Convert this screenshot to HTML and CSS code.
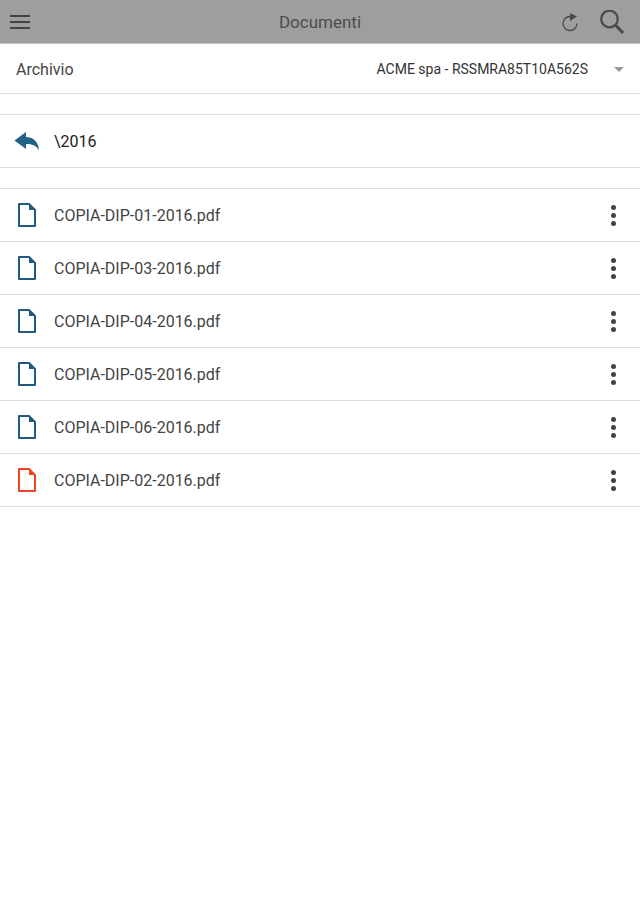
FILE: index.html
```html
<!DOCTYPE html>
<html lang="en">
<head>
  <meta charset="UTF-8">
  <meta name="viewport" content="width=device-width, initial-scale=1.0">
  <title>Documenti</title>
  <link rel="stylesheet" href="styles.css">
</head>
<body>

<header class="toolbar">
  <div class="toolbar-left">
    <div class="menu-icon"><span></span><span></span><span></span></div>
  </div>
  <div class="toolbar-title">Documenti</div>
  <div class="toolbar-actions">
    <svg class="refresh-icon" width="18" height="20" viewBox="0 0 18 20">
      <path d="M9 4.500 A7 7 0 1 0 16 11.500" fill="none" stroke="#4a4a4a" stroke-width="1.300"/>
      <path d="M9 1 L16 4.500 L9 9 Z" fill="#4a4a4a"/>
    </svg>
    <svg class="search-icon" width="24" height="24" viewBox="0 0 24 24">
      <circle cx="9.500" cy="9" r="8.300" fill="none" stroke="#4a4a4a" stroke-width="2.200"/>
      <path d="M15.500 15 L23 23" fill="none" stroke="#4a4a4a" stroke-width="3"/>
    </svg>
  </div>
</header>

<div class="archive-row">
  <span class="archive-label">Archivio</span>
  <span class="archive-value">ACME spa - RSSMRA85T10A562S</span>
  <span class="caret"></span>
</div>

<div class="path-row">
  <svg class="back-icon" width="26" height="22" viewBox="0 0 26 22">
    <path d="M0.500 10.500 L12 2 L12 7 C19 7 24 11 25 20 C22 15.500 18 14 12 14 L12 19 Z" fill="#22618a"/>
  </svg>
  <span class="path-name">\2016</span>
</div>

<ul class="file-list">
  <li class="file-row">
    <svg class="file-icon" width="20" height="24" viewBox="0 0 20 24"><path d="M2 1 H12 L18 7 V23 H2 Z" fill="none" stroke="#22597f" stroke-width="2" stroke-linejoin="round"/><path d="M12 1 V7 H18 Z" fill="#22597f"/></svg>
    <span class="file-name">COPIA-DIP-01-2016.pdf</span>
    <div class="more"><span></span><span></span><span></span></div>
  </li>
  <li class="file-row">
    <svg class="file-icon" width="20" height="24" viewBox="0 0 20 24"><path d="M2 1 H12 L18 7 V23 H2 Z" fill="none" stroke="#22597f" stroke-width="2" stroke-linejoin="round"/><path d="M12 1 V7 H18 Z" fill="#22597f"/></svg>
    <span class="file-name">COPIA-DIP-03-2016.pdf</span>
    <div class="more"><span></span><span></span><span></span></div>
  </li>
  <li class="file-row">
    <svg class="file-icon" width="20" height="24" viewBox="0 0 20 24"><path d="M2 1 H12 L18 7 V23 H2 Z" fill="none" stroke="#22597f" stroke-width="2" stroke-linejoin="round"/><path d="M12 1 V7 H18 Z" fill="#22597f"/></svg>
    <span class="file-name">COPIA-DIP-04-2016.pdf</span>
    <div class="more"><span></span><span></span><span></span></div>
  </li>
  <li class="file-row">
    <svg class="file-icon" width="20" height="24" viewBox="0 0 20 24"><path d="M2 1 H12 L18 7 V23 H2 Z" fill="none" stroke="#22597f" stroke-width="2" stroke-linejoin="round"/><path d="M12 1 V7 H18 Z" fill="#22597f"/></svg>
    <span class="file-name">COPIA-DIP-05-2016.pdf</span>
    <div class="more"><span></span><span></span><span></span></div>
  </li>
  <li class="file-row">
    <svg class="file-icon" width="20" height="24" viewBox="0 0 20 24"><path d="M2 1 H12 L18 7 V23 H2 Z" fill="none" stroke="#22597f" stroke-width="2" stroke-linejoin="round"/><path d="M12 1 V7 H18 Z" fill="#22597f"/></svg>
    <span class="file-name">COPIA-DIP-06-2016.pdf</span>
    <div class="more"><span></span><span></span><span></span></div>
  </li>
  <li class="file-row">
    <svg class="file-icon" width="20" height="24" viewBox="0 0 20 24"><path d="M2 1 H12 L18 7 V23 H2 Z" fill="none" stroke="#ee4423" stroke-width="2" stroke-linejoin="round"/><path d="M12 1 V7 H18 Z" fill="#ee4423"/></svg>
    <span class="file-name">COPIA-DIP-02-2016.pdf</span>
    <div class="more"><span></span><span></span><span></span></div>
  </li>
</ul>

</body>
</html>
```

FILE: styles.css
```css
body {
  font-family: Roboto, Arial, sans-serif;
  background-color: #fff;
  color: #444;
  margin: 0;
  padding: 0;
}

.toolbar {
  display: grid;
  grid-template-columns: 1fr auto 1fr;
  align-items: center;
  height: 42px;
  background-color: #9e9e9e;
  border-bottom: 1px solid #c4c4c4;
  padding: 1px 16px 0;
}

.menu-icon {
  margin-left: -6px;
}

.menu-icon span {
  display: block;
  width: 20px;
  height: 2px;
  background-color: #444;
  margin-bottom: 4px;
}

.menu-icon span:last-child {
  margin-bottom: 0;
}

.toolbar-title {
  font-size: 17px;
  color: #4c4c4c;
}

.toolbar-actions {
  display: flex;
  align-items: center;
  justify-content: flex-end;
  gap: 21px;
}

.archive-row {
  display: flex;
  align-items: center;
  height: 48px;
  padding: 1px 16px 0;
  border-bottom: 1px solid #ddd;
}

.archive-label {
  font-size: 16px;
  flex: 1;
}

.archive-value {
  font-size: 14px;
  color: #333;
}

.caret {
  width: 0;
  height: 0;
  border-left: 5px solid transparent;
  border-right: 5px solid transparent;
  border-top: 5px solid #999;
  margin-left: 26px;
}

.path-row {
  display: flex;
  align-items: center;
  height: 52px;
  margin-top: 20px;
  padding-left: 14px;
  border-top: 1px solid #ddd;
  border-bottom: 1px solid #ddd;
}

.back-icon {
  margin-right: 14px;
}

.path-name {
  font-size: 16px;
  color: #222;
}

.file-list {
  list-style: none;
  margin: 20px 0 0;
  padding: 0;
  border-top: 1px solid #ddd;
}

.file-row {
  display: flex;
  align-items: center;
  height: 52px;
  padding-left: 17px;
  border-bottom: 1px solid #ddd;
}

.file-icon {
  margin-right: 17px;
}

.file-name {
  flex: 1;
  font-size: 16px;
}

.more {
  margin-right: 24px;
}

.more span {
  display: block;
  width: 5px;
  height: 5px;
  border-radius: 50%;
  background-color: #444;
  margin-bottom: 3px;
}

.more span:last-child {
  margin-bottom: 0;
}
```
